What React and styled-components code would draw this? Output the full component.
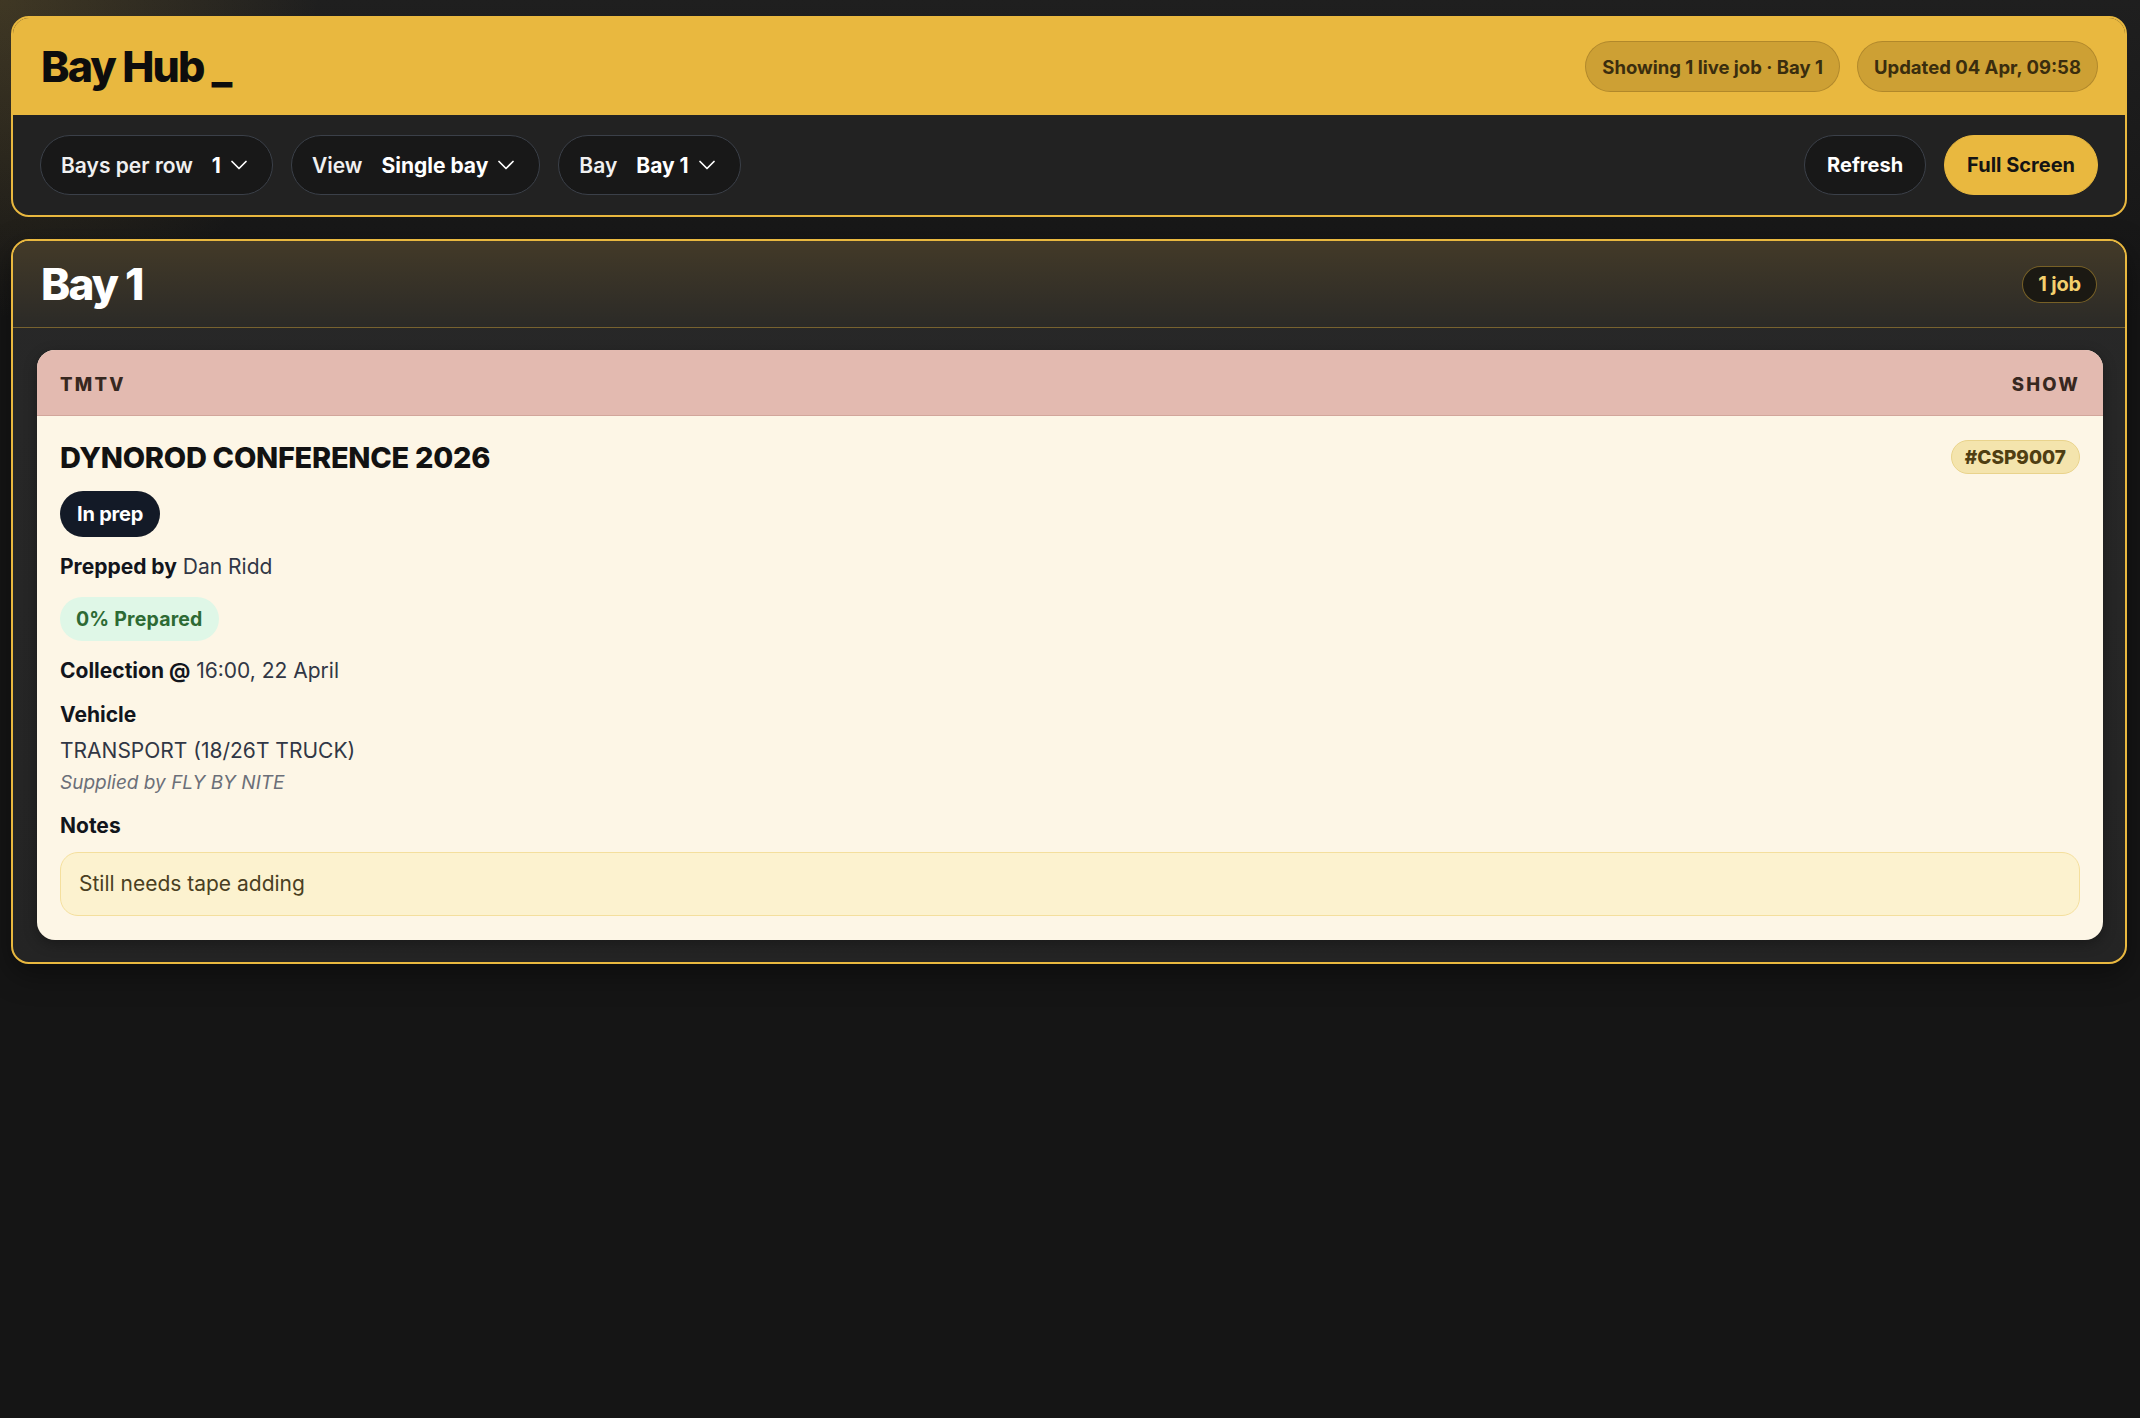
import React from 'react';
import styled, { createGlobalStyle } from 'styled-components';
import { ChevronDown } from 'lucide-react';

const GlobalStyle = createGlobalStyle`
	html, body {
		margin: 0;
		padding: 0;
		min-height: 100%;
	}
	body {
		font-family: Inter, 'Noto Sans', 'Liberation Sans', sans-serif;
		background:
			radial-gradient(circle at 0 0, rgba(233, 184, 63, 0.16), transparent 320px),
			linear-gradient(180deg, #1f1f1f 0, #151515 320px, #151515 100%);
		min-height: 1418px;
		color: #fff;
	}
`;

const Page = styled.div`
	display: flex;
	flex-direction: column;
	gap: 22px;
	padding: 16px 13px 16px 11px;
`;

const HeaderPanel = styled.header`
	border: 2px solid #e9b83f;
	border-radius: 18px;
	overflow: hidden;
	background: #222222;
`;

const TitleBar = styled.div`
	display: flex;
	align-items: center;
	justify-content: space-between;
	height: 97px;
	padding: 0 27px 0 28px;
	background: #e9b83f;
`;

const Title = styled.h1`
	display: flex;
	align-items: baseline;
	margin: 0;
	font-size: 43px;
	font-weight: 800;
	letter-spacing: -0.045em;
	color: #0d0d0d;
	line-height: 1;
`;

const Cursor = styled.span`
	margin-left: 8px;
	letter-spacing: 0;
`;

const ChipRow = styled.div`
	display: flex;
	gap: 17px;
`;

const Chip = styled.span`
	display: inline-flex;
	align-items: center;
	height: 51px;
	padding: 0 16px;
	border-radius: 999px;
	background: rgba(60, 40, 0, 0.16);
	border: 1px solid rgba(60, 40, 0, 0.2);
	color: #3a2d0e;
	font-size: 18.5px;
	font-weight: 700;
	box-sizing: border-box;
`;

const Toolbar = styled.div`
	display: flex;
	align-items: center;
	justify-content: space-between;
	height: 100px;
	padding: 0 27px;
`;

const Group = styled.div`
	display: flex;
	align-items: center;
	gap: 18px;
`;

const Select = styled.button`
	display: inline-flex;
	align-items: center;
	height: 60px;
	padding: 0 19px 0 20px;
	border-radius: 999px;
	border: 1px solid #3b4049;
	background: #181818;
	color: #fff;
	font-family: inherit;
	font-size: 21px;
	font-weight: 600;
	cursor: pointer;

	svg {
		margin-left: 4px;
	}
`;

const SelectLabel = styled.span`
	color: #f0f0f0;
	margin-right: 19px;
`;

const SelectValue = styled.span`
	font-weight: 700;
`;

const Button = styled.button`
	height: 60px;
	padding: 0 22px;
	border-radius: 999px;
	border: 1px solid ${(p) => (p.$primary ? '#e9b83f' : '#3b4049')};
	background: ${(p) => (p.$primary ? '#e9b83f' : '#181818')};
	color: ${(p) => (p.$primary ? '#141414' : '#fff')};
	font-family: inherit;
	font-size: 20px;
	font-weight: 700;
	cursor: pointer;
`;

const BayPanel = styled.section`
	border: 2px solid #e9b83f;
	border-radius: 18px;
	overflow: hidden;
	background: linear-gradient(180deg, #282828 0, #242424 100%);
	box-shadow: 0 10px 30px rgba(0, 0, 0, 0.4);
`;

const BayHeader = styled.div`
	display: flex;
	align-items: center;
	justify-content: space-between;
	height: 86px;
	padding: 0 28px;
	border-bottom: 1px solid rgba(233, 184, 63, 0.32);
	background: linear-gradient(180deg, #433a28 0, #2b2a27 100%);
`;

const BayTitle = styled.h2`
	margin: 0;
	font-size: 44px;
	font-weight: 800;
	letter-spacing: -0.04em;
	color: #fff;
	line-height: 1;
`;

const JobCount = styled.span`
	display: inline-flex;
	align-items: center;
	height: 37px;
	padding: 0 15px;
	border-radius: 999px;
	background: #1b1913;
	border: 1px solid rgba(233, 184, 63, 0.45);
	color: #f4d06d;
	font-size: 20px;
	font-weight: 700;
	letter-spacing: -0.01em;
	box-sizing: border-box;
`;

const BayBody = styled.div`
	padding: 22px 22px 22px 24px;
`;

const JobCard = styled.article`
	border-radius: 18px;
	overflow: hidden;
	background: #fdf6e6;
	box-shadow: 0 4px 14px rgba(0, 0, 0, 0.3);
`;

const CardHead = styled.div`
	display: flex;
	align-items: center;
	justify-content: space-between;
	height: 66px;
	padding: 2px 23px 0;
	box-sizing: border-box;
	background: #e3bab0;
	border-bottom: 1px solid #d2a69b;
	color: #372820;
	font-size: 18.5px;
	font-weight: 800;
	letter-spacing: 0.12em;
	text-transform: uppercase;
`;

const CardBody = styled.div`
	display: flex;
	flex-direction: column;
	align-items: flex-start;
	gap: 16px;
	padding: 23px 23px 24px;
	color: #12151c;
`;

const TitleRow = styled.div`
	display: flex;
	align-items: center;
	justify-content: space-between;
	align-self: stretch;
	height: 36px;
`;

const JobTitle = styled.h3`
	margin: 0;
	font-size: 29px;
	font-weight: 800;
	letter-spacing: -0.01em;
	color: #121212;
`;

const Ref = styled.span`
	display: inline-flex;
	align-items: center;
	height: 34px;
	padding: 0 13px;
	border-radius: 999px;
	background: #f4e4ad;
	border: 1px solid #e9d38c;
	color: #4f3e12;
	font-size: 19px;
	font-weight: 800;
	box-sizing: border-box;
`;

const Pill = styled.span`
	display: inline-flex;
	align-items: center;
	height: ${(p) => (p.$tone === 'green' ? '44px' : '46px')};
	padding: 0 ${(p) => (p.$tone === 'green' ? '16px' : '17px')};
	border-radius: 999px;
	background: ${(p) => (p.$tone === 'green' ? '#dff7e7' : '#131a27')};
	color: ${(p) => (p.$tone === 'green' ? '#2d6a34' : '#fff')};
	font-size: ${(p) => (p.$tone === 'green' ? '19.5px' : '20px')};
	font-weight: 700;
	letter-spacing: ${(p) => (p.$tone === 'green' ? '0.01em' : '-0.01em')};
`;

const Line = styled.div`
	font-size: 21px;
	line-height: 28px;
	color: #313745;

	b {
		font-weight: 700;
		color: #12151c;
	}
`;

const Stack = styled.div`
	display: flex;
	flex-direction: column;
	align-self: stretch;
	gap: ${(p) => p.$gap || '0px'};
`;

const Label = styled.div`
	font-size: 21px;
	line-height: 28px;
	font-weight: 700;
	color: #12151c;
`;

const SubLine = styled(Line)`
	margin-top: 8px;
`;

const Muted = styled.div`
	margin-top: 5px;
	font-size: 19px;
	line-height: 26px;
	font-style: italic;
	color: #6b6f78;
`;

const NoteBox = styled.div`
	padding: 17px 18px;
	border-radius: 18px;
	background: #fcf2cf;
	border: 1px solid #f4df9d;
	color: #4a3f22;
	font-size: 21px;
	line-height: 28px;
`;

function Dropdown({ label, value }) {
	return (
		<Select>
			<SelectLabel>{label}</SelectLabel>
			<SelectValue>{value}</SelectValue>
			<ChevronDown size={28} strokeWidth={1.5} />
		</Select>
	);
}

export default function App() {
	return (
		<>
			<GlobalStyle />
			<Page>
				<HeaderPanel>
					<TitleBar>
						<Title>
							Bay Hub<Cursor>_</Cursor>
						</Title>
						<ChipRow>
							<Chip>Showing 1 live job · Bay 1</Chip>
							<Chip>Updated 04 Apr, 09:58</Chip>
						</ChipRow>
					</TitleBar>
					<Toolbar>
						<Group>
							<Dropdown label="Bays per row" value="1" />
							<Dropdown label="View" value="Single bay" />
							<Dropdown label="Bay" value="Bay 1" />
						</Group>
						<Group>
							<Button>Refresh</Button>
							<Button $primary>Full Screen</Button>
						</Group>
					</Toolbar>
				</HeaderPanel>

				<BayPanel>
					<BayHeader>
						<BayTitle>Bay 1</BayTitle>
						<JobCount>1 job</JobCount>
					</BayHeader>
					<BayBody>
						<JobCard>
							<CardHead>
								<span>TMTV</span>
								<span>Show</span>
							</CardHead>
							<CardBody>
								<TitleRow>
									<JobTitle>DYNOROD CONFERENCE 2026</JobTitle>
									<Ref>#CSP9007</Ref>
								</TitleRow>
								<Pill>In prep</Pill>
								<Line>
									<b>Prepped by</b> Dan Ridd
								</Line>
								<Pill $tone="green">0% Prepared</Pill>
								<Line>
									<b>Collection @</b> 16:00, 22 April
								</Line>
								<Stack>
									<Label>Vehicle</Label>
									<SubLine>TRANSPORT (18/26T TRUCK)</SubLine>
									<Muted>Supplied by FLY BY NITE</Muted>
								</Stack>
								<Stack $gap="12px">
									<Label>Notes</Label>
									<NoteBox>Still needs tape adding</NoteBox>
								</Stack>
							</CardBody>
						</JobCard>
					</BayBody>
				</BayPanel>
			</Page>
		</>
	);
}
